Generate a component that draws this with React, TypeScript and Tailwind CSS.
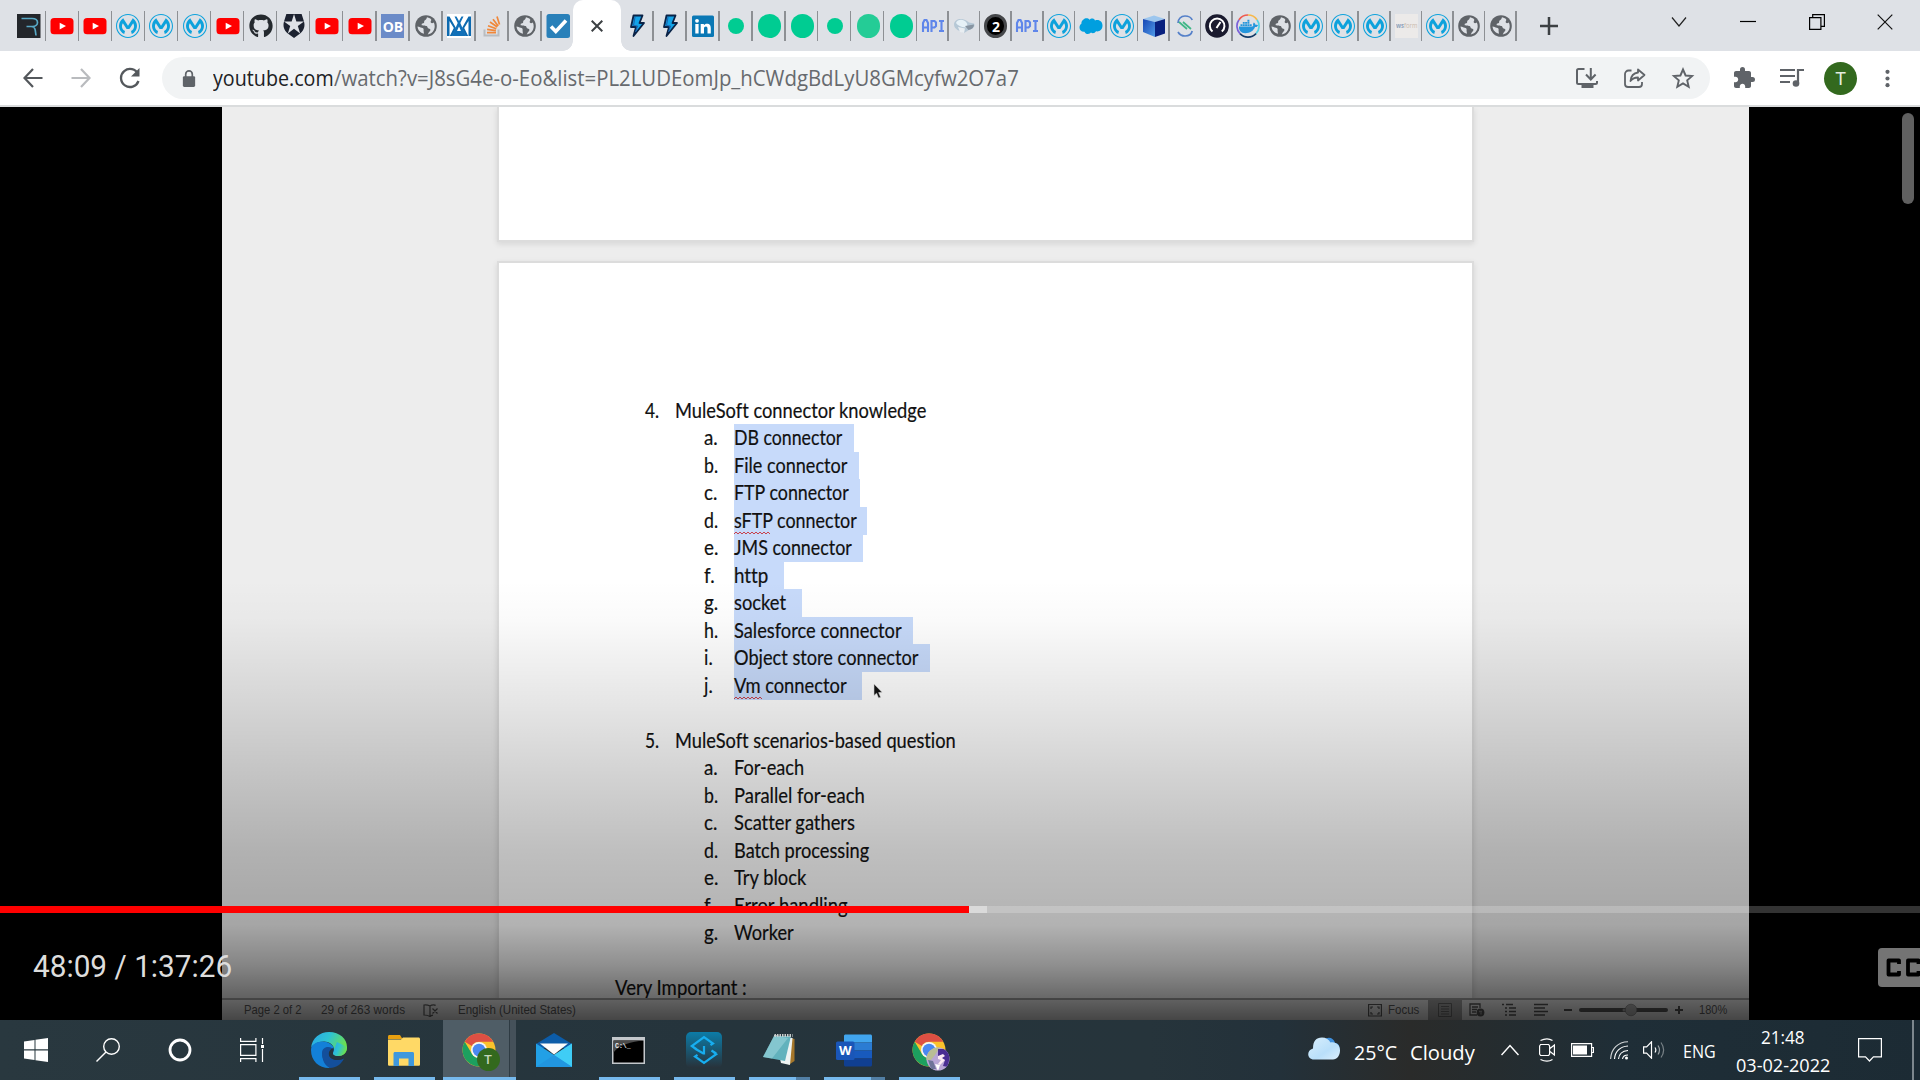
import { useLayoutEffect, useRef, type ReactNode } from "react";
import { FaGithub, FaDocker } from "react-icons/fa";
import { SiMulesoft, SiAuth0 } from "react-icons/si";
import { MdExtension } from "react-icons/md";

/* Single-line text squeezed or stretched to an exact width. */
function Fit({ w, className = "", children }: { w: number; className?: string; children: ReactNode }) {
  const ref = useRef<HTMLSpanElement>(null);
  useLayoutEffect(() => {
    const el = ref.current;
    if (el) el.style.transform = `scaleX(${w / el.offsetWidth})`;
  }, [w]);
  return (
    <span className={`inline-block shrink-0 whitespace-nowrap ${className}`} style={{ width: w }}>
      <span ref={ref} className="inline-block origin-left whitespace-nowrap">
        {children}
      </span>
    </span>
  );
}

/* ---------- favicons ---------- */

const YouTube = () => (
  <svg viewBox="0 0 24 24" className="size-6">
    <rect x="0.5" y="4" width="23" height="16.3" rx="3.6" fill="#f00" />
    <path d="M9.7 8.7 16 12.1l-6.3 3.5z" fill="#fff" />
  </svg>
);
const Mule = () => <SiMulesoft className="size-6 text-[#0ea2dc]" />;
const Globe = () => (
  <svg viewBox="0 0 24 24" className="size-6">
    <circle cx="12" cy="12" r="10.8" fill="#5f6368" />
    <path d="M13 3.3c-.6 1.2-.2 2-1.6 2.6-1.5.5-1.2 1.6-1.3 2.8-.9.8-2.6.4-2.5 2 .1 1.3 3.7.6 5 1.4 1.4.9.5 2.3 2.8 2.6 1.5.3 1.2 1.9.2 2.7-1.2 1-1.1 2-1.9 3.1 4.200-.7 7-4 7-8.200 0-1.400-.3-2.600-.9-3.700-1.100.6-2 .9-2.800.2-1-.9.4-1.900.3-3C16.700 4.500 15.100 3.700 13 3.300z" fill="#dee1e6" />
    <path d="M3.500 12.500c1.800.1 2.600 1 4.200 1.200 1.400.3 2.200.8 1.900 2.200-.2 1.200.4 1.900.3 3.900-3.600-1-6.100-3.700-6.400-7.300z" fill="#dee1e6" />
  </svg>
);
const LetterR = () => (
  <svg viewBox="0 0 24 24" className="size-6">
    <rect width="23.500" height="24" fill="#23262b" />
    <path d="M4.500 4.500H15c3.500 0 5.500 1.600 5.500 4s-2.200 4-5 4H9.500M14 12.500c3 0 4 1.500 4.300 4l.7 5" fill="none" stroke="#58a9c6" strokeWidth="1.700" />
  </svg>
);
const OB = () => (
  <span className="flex h-6 w-[23px] items-center justify-center bg-[#6b8bc8] font-['Open_Sans',sans-serif] text-[14px] font-bold tracking-tight text-white">OB</span>
);
const Peaks = () => (
  <svg viewBox="0 0 24 24" className="size-6">
    <rect width="24" height="24" fill="#fff" />
    <path d="M0 22V2.500h2.500L9 14 5.500 22H2.800l4-8L2.500 7v15zM24 22V2.500h-2.500L15 14l3.500 8h2.700l-4-8 4.300-7v15z" fill="#0d6ab0" />
    <path d="M7.500 2.500h2L12 7l2.500-4.500h2L13.300 9 19 22H5L10.700 9zM12 12.500l-2 4.500h4z" fill="#1170b8" fillRule="evenodd" />
  </svg>
);
const Stack = () => (
  <svg viewBox="0 0 24 24" className="size-6">
    <path d="M4.500 15.500v6h14v-6" fill="none" stroke="#b9bdc1" strokeWidth="2" />
    <g stroke="#f0873a" strokeWidth="1.700">
      <path d="M7 18.600h9M7.100 15.400l8.800 1.200M8 11.800l8.300 3M10 8l7.300 5M13 5.200l5.200 6.800M17 2.500l2.500 8" />
    </g>
  </svg>
);
const Check = () => (
  <svg viewBox="0 0 24 24" className="size-6">
    <rect x="0.500" width="23.500" height="24" rx="2.500" fill="#2980b9" />
    <path d="m5 12.500 4.800 5L20 6.500" fill="none" stroke="#fff" strokeWidth="3.600" />
  </svg>
);
const Bolt = () => (
  <svg viewBox="0 0 24 24" className="size-6">
    <path d="M8.500 1.500h9L14.500 9H19L8.500 22l2.500-9H6z" fill="#12a3e8" stroke="#0a2347" strokeWidth="1.800" strokeLinejoin="round" />
    <path d="m10 3-1.500 8.500 4 .5-2 6" fill="none" stroke="#1d5ea8" strokeWidth="1" />
  </svg>
);
const LinkedIn = () => (
  <svg viewBox="0 0 24 24" className="size-6">
    <rect x="1" y="1.500" width="22" height="21.500" rx="1.500" fill="#0a78b5" />
    <g fill="#fff">
      <circle cx="6" cy="6.800" r="1.900" />
      <path d="M4.300 10h3.300v9.500H4.300zM9.700 10h3.200v1.300c.6-1 1.700-1.600 3-1.600 3 0 3.900 1.900 3.900 4.700v5.100h-3.300v-4.700c0-1.300-.3-2.300-1.600-2.300s-1.900.9-1.900 2.300v4.700H9.700z" />
    </g>
  </svg>
);
const SmallDot = () => <span className="size-4 rounded-full bg-[#00cc92]" />;
const BigDot = () => <span className="h-6 w-[23px] rounded-full bg-[#00cc92]" />;
const PaleDot = () => <span className="h-6 w-[23px] rounded-full bg-[#24cc96]" />;
const Api = () => (
  <svg viewBox="0 0 24 24" className="size-6">
    <g fill="none" stroke="#5f86ea" strokeWidth="2.100">
      <path d="M2 18V9l1.500-3h2L7 9v9M2 13.500h5M10.500 18V7h3l1.500 1.500V12l-1.500 1.500h-3M18 7h5M20.500 7v10M18 17h5" />
    </g>
  </svg>
);
const Drive = () => (
  <svg viewBox="0 0 24 24" className="size-6">
    <path d="M2 10.500c0-4 4-6 8-5.500s6 3 7 3.500l5 1c1.500 3-.5 5-5 6.500l-5 3C8 17 2 15.500 2 10.500z" fill="#b6c8d6" />
    <path d="M4 9c1-3 5-4 8-2.500s4 4.500 3 6.500c-4 1-9-1-11-4z" fill="#e6f1f7" />
    <path d="m6 13 7 1.500-1 4.500-4-1z" fill="#e9eef2" />
    <path d="m13 12 9-1.500c0 3-2 5-5.500 5.500z" fill="#8794a1" />
  </svg>
);
const Two = () => (
  <span className="flex h-6 w-[23px] items-center justify-center rounded-full border-[3px] border-[#45474a] bg-black font-['Open_Sans',sans-serif] text-[14px] font-bold text-white">2</span>
);
const Salesforce = () => (
  <svg viewBox="0 0 24 24" className="size-6">
    <path d="M4.500 5.500C6 4 9 3.800 10.500 5.800 12 4 15 4 16 6.500c4-1.500 7.500 1 7.500 5s-3 6.500-6.500 5.800c-1 2-3.500 2.500-5 1.300-1.500 2-5.500 2-6.500-.9C2.500 18 .5 16 .5 13.500c0-2 .8-3 2-4-.4-1.500.7-3 2-4z" fill="#009fdf" />
  </svg>
);
const Cube = () => (
  <svg viewBox="0 0 24 24" className="size-6">
    <defs>
      <linearGradient id="cubeSide" x1="0" y1="0" x2="1" y2="1">
        <stop offset="0" stopColor="#1846b4" />
        <stop offset="1" stopColor="#4f9be8" />
      </linearGradient>
    </defs>
    <path d="m1 5 11-3.500L23 5 13 8z" fill="#9cc6ee" />
    <path d="m1 5 12 3v15L1 18z" fill="url(#cubeSide)" />
    <path d="m13 8 10-3v14.500L13 23z" fill="#08207f" />
  </svg>
);
const Swirl = () => (
  <svg viewBox="0 0 24 24" className="size-6" fill="none">
    <path d="M5 9c0-4 3-7 7-7 3.500 0 6.500 2 7.200 4M5 18c1.500 2.600 4 4 7 4 3.500 0 6.500-2 7.200-5" stroke="#5580c9" strokeWidth="1.700" />
    <path d="m6 8 8 7M10 8l8 7" stroke="#3fb787" strokeWidth="1.700" />
  </svg>
);
const Gauge = () => (
  <svg viewBox="0 0 24 24" className="size-6" fill="none">
    <circle cx="12" cy="12" r="11.800" fill="#1a1a2e" />
    <path d="M7.500 17.500a7.300 7.300 0 1 1 9.300 0M11.500 14l4-6" stroke="#fff" strokeWidth="2" />
  </svg>
);
const Docker = () => (
  <span className="relative flex size-6 items-center justify-center">
    <svg viewBox="0 0 24 24" className="absolute inset-0" fill="none" strokeWidth="1.700">
      <path d="M12 1a11 11 0 0 1 9 4.700" stroke="#f7b84b" />
      <path d="M21 5.700a11 11 0 0 1-1 14" stroke="#52d3e6" />
      <path d="M20 19.700a11 11 0 0 1-16 0" stroke="#123a66" />
      <path d="M4 19.700A11 11 0 0 1 3 5.700" stroke="#7b61d8" />
      <path d="M3 5.700A11 11 0 0 1 12 1" stroke="#ef5b50" />
    </svg>
    <FaDocker className="size-[19px] text-[#2496dc]" />
  </span>
);
const WsForm = () => (
  <span className="flex h-6 w-[23px] items-center justify-center bg-[#eceae9] font-['Open_Sans',sans-serif] text-[7px] text-[#c9b9ad]">
    <Fit w={21}>
      <b className="text-[#8fa3bd]">ws</b>form
    </Fit>
  </span>
);
const Github = () => <FaGithub className="size-6 text-[#24292e]" />;
const Auth0 = () => <SiAuth0 className="size-6 text-[#1c2230]" />;

const leftTabs = [LetterR, YouTube, YouTube, Mule, Mule, Mule, YouTube, Github, Auth0, YouTube, YouTube, OB, Globe, Peaks, Stack, Globe];
const midTabs = [Bolt, Bolt, LinkedIn, SmallDot, BigDot, BigDot, SmallDot, PaleDot, BigDot];
const rightTabs = [Api, Drive, Two, Api, Mule, Salesforce, Mule, Cube, Swirl, Gauge, Docker, Globe, Mule, Mule, Mule, WsForm, Mule, Globe, Globe];

function Sep() {
  return <span className="-ml-px h-[30px] w-[1.500px] shrink-0 bg-[#8d9094]" />;
}

function TabStrip() {
  return (
    <div className="flex h-[51px] bg-[#dee1e6] pl-[13px]">
      {leftTabs.map((Icon, i) => (
        <div key={i} className="flex h-[52px] w-[33.060px] shrink-0 items-center">
          <span className="flex flex-1 items-center justify-center">
            <Icon />
          </span>
          <Sep />
        </div>
      ))}
      <div className="flex h-[52px] w-[31px] shrink-0 items-center pl-[4px]">
        <Check />
      </div>
      <div className="relative flex h-[51px] w-[48px] shrink-0 items-center justify-center rounded-t-[10px] bg-white">
        <span className="absolute bottom-0 left-[-10px] size-[10px] bg-[radial-gradient(circle_at_0_0,transparent_9.500px,white_10px)]" />
        <span className="absolute right-[-10px] bottom-0 size-[10px] bg-[radial-gradient(circle_at_100%_0,transparent_9.500px,white_10px)]" />
        <svg viewBox="0 0 12 12" className="size-3">
          <path d="m.7.7 10.600 10.600M11.300.7.7 11.300" stroke="#3c4043" strokeWidth="2" />
        </svg>
      </div>
      {midTabs.map((Icon, i) => (
        <div key={i} className="flex h-[52px] w-[32.960px] shrink-0 items-center">
          <span className="flex flex-1 items-center justify-center pl-px">
            <Icon />
          </span>
          <Sep />
        </div>
      ))}
      {rightTabs.map((Icon, i) => (
        <div key={i} className="flex h-[52px] w-[31.550px] shrink-0 items-center">
          <span className="flex flex-1 items-center justify-center">
            <Icon />
          </span>
          <Sep />
        </div>
      ))}
      <svg viewBox="0 0 18 18" className="mt-[17px] ml-[23px] size-[18px]">
        <path d="M9 0v18M0 9h18" stroke="#3c4043" strokeWidth="2.500" />
      </svg>
      <div className="mt-[13px] ml-auto flex h-[18px] items-center pr-[27px]">
        <svg viewBox="0 0 16 18" className="h-[18px] w-4" fill="none" stroke="#222" strokeWidth="1.200">
          <path d="m1 4.500 7 8.500 7-8.500" />
        </svg>
        <svg viewBox="0 0 16 18" className="ml-[53px] h-[18px] w-4">
          <path d="M0 8.500h16" stroke="#000" strokeWidth="1.200" />
        </svg>
        <svg viewBox="0 0 16 16" className="ml-[53px] size-4" fill="none" stroke="#000" strokeWidth="1.200">
          <path d="M.6 3.600h11.300v11.700H.6zM3.700 3.600V.6h11.700v11.700h-3.500" />
        </svg>
        <svg viewBox="0 0 16 16" className="ml-[52px] size-4" stroke="#111" strokeWidth="1.200">
          <path d="m.7.7 14.600 14.600M15.300.7.7 15.300" />
        </svg>
      </div>
    </div>
  );
}

function Toolbar() {
  return (
    <div className="flex h-[56px] items-center border-b-2 border-[#dadcdd] bg-white font-['Open_Sans',sans-serif]">
      <svg viewBox="0 0 20 20" className="ml-[23px] size-5" fill="none" stroke="#54585c" strokeWidth="2.200">
        <path d="M19.500 10H1.800M10 1 1.500 10 10 19" />
      </svg>
      <svg viewBox="0 0 20 20" className="ml-[28px] size-5" fill="none" stroke="#b9bbbe" strokeWidth="2.200">
        <path d="M.5 10h17.700M10 1l8.500 9-8.500 9" />
      </svg>
      <svg viewBox="0 0 22 22" className="ml-[28px] size-[22px]" fill="none" stroke="#54585c" strokeWidth="2.300">
        <path d="M19.200 7.200A9 9 0 1 0 19.500 14" />
        <path d="M20.500 1v8.500H12z" fill="#54585c" stroke="none" />
      </svg>
      <div className="ml-[21px] flex h-[42px] w-[1548px] items-center rounded-full bg-[#f1f3f4]">
        <svg viewBox="0 0 14 18" className="ml-[20px] h-[17px] w-[14px]">
          <rect x="0.500" y="6.500" width="13" height="11.500" rx="1.500" fill="#5f6368" />
          <path d="M3.500 8V4.500a3.500 3.500 0 0 1 7 0V8" fill="none" stroke="#5f6368" strokeWidth="1.800" />
        </svg>
        <Fit w={121} className="ml-[17px] text-[21px] leading-[42px] text-[#202124]">youtube.com</Fit>
        <Fit w={685} className="text-[21px] leading-[42px] text-[#676a6e]">/watch?v=J8sG4e-o-Eo&amp;list=PL2LUDEomJp_hCWdgBdLyU8GMcyfw2O7a7</Fit>
        <svg viewBox="0 0 22 20" className="ml-auto h-5 w-[22px]" fill="none" stroke="#5f6368" strokeWidth="2">
          <path d="M8.500 1H2.500A1.500 1.500 0 0 0 1 2.500v12A1.500 1.500 0 0 0 2.500 16h17a1.500 1.500 0 0 0 1.500-1.500V13M14.800 0v10M10 6.500l4.800 5 4.800-5" />
          <path d="M5.500 16h12v4h-12z" fill="#5f6368" stroke="none" />
        </svg>
        <svg viewBox="0 0 22 20" className="ml-[26px] h-5 w-[22px]" fill="none" stroke="#5f6368" strokeWidth="1.800">
          <path d="M7.500 2.500h-3A3.500 3.500 0 0 0 1 6v10a3 3 0 0 0 3 3h11a3 3 0 0 0 3-3v-2" />
          <path d="M14 1.500 20.500 7 14 12.500V9.500c-3.500 0-5.500.8-7.500 3.500C7 8 9.500 5 14 4.500z" strokeLinejoin="round" />
        </svg>
        <svg viewBox="0 0 24 24" className="mr-[15px] ml-[25px] size-6" fill="none" stroke="#5f6368" strokeWidth="1.900">
          <path d="m12 3.500 2.600 6 6.500.6-4.900 4.300 1.500 6.400-5.700-3.400-5.700 3.400 1.500-6.400-4.900-4.300 6.500-.6z" />
        </svg>
      </div>
      <MdExtension className="ml-[22px] size-6 text-[#5f6368]" />
      <svg viewBox="0 0 24 20" className="ml-[24px] h-5 w-6" fill="none" stroke="#5f6368" strokeWidth="2.200">
        <path d="M0 2h15M0 8h15M0 14h10M18 15V2h6" />
        <circle cx="16" cy="15.500" r="3.300" fill="#5f6368" stroke="none" />
      </svg>
      <span className="ml-[20px] flex size-[33px] items-center justify-center rounded-full bg-[#33691e] font-[Roboto,sans-serif] text-[18px] text-[#e4ede0]">T</span>
      <svg viewBox="0 0 6 22" className="ml-[28px] h-[21px] w-[5px]" fill="#5f6368">
        <circle cx="3" cy="3" r="2.500" />
        <circle cx="3" cy="11" r="2.500" />
        <circle cx="3" cy="19" r="2.500" />
      </svg>
    </div>
  );
}

/* ---------- Word document inside the video ---------- */

type Item = { mark: string; text: string; w: number; sel?: number; wavy?: number };

const connectors: Item[] = [
  { mark: "a.", text: "DB connector", w: 108, sel: 120 },
  { mark: "b.", text: "File connector", w: 113.5, sel: 125.5 },
  { mark: "c.", text: "FTP connector", w: 114.5, sel: 126.5 },
  { mark: "d.", text: "sFTP connector", w: 122.5, sel: 133.5, wavy: 37 },
  { mark: "e.", text: "JMS connector", w: 118, sel: 129.5 },
  { mark: "f.", text: "http", w: 34, sel: 50 },
  { mark: "g.", text: "socket", w: 52, sel: 68 },
  { mark: "h.", text: "Salesforce connector", w: 167.5, sel: 179 },
  { mark: "i.", text: "Object store connector", w: 184.5, sel: 196.5 },
  { mark: "j.", text: "Vm connector", w: 112.5, sel: 128.5, wavy: 28 },
];

const scenarios: Item[] = [
  { mark: "a.", text: "For-each", w: 70 },
  { mark: "b.", text: "Parallel for-each", w: 131 },
  { mark: "c.", text: "Scatter gathers", w: 121 },
  { mark: "d.", text: "Batch processing", w: 135.5 },
  { mark: "e.", text: "Try block", w: 72.5 },
  { mark: "f.", text: "Error handling", w: 114 },
  { mark: "g.", text: "Worker", w: 60 },
];

const markWidths: Record<string, number> = { "c.": 13, "f.": 10.5, "i.": 8.5, "j.": 8.5 };

function Squiggle({ width }: { width: number }) {
  let d = "M0 3";
  for (let x = 2; x <= width; x += 2) d += `L${x} ${x % 4 === 2 ? 1 : 3}`;
  return (
    <svg className="absolute bottom-0 left-0 h-1 w-[40px]" fill="none" stroke="#c8414b" strokeWidth="1">
      <path d={d} />
    </svg>
  );
}

function Heading({ n, text, w }: { n: string; text: string; w: number }) {
  return (
    <div className="flex h-[27.500px] pl-[146px]">
      <Fit w={14.5} className="mr-[15px]">{n}</Fit>
      <Fit w={w}>{text}</Fit>
    </div>
  );
}

function Rows({ items }: { items: Item[] }) {
  return (
    <>
      {items.map((it) => (
        <div key={it.text} className="flex h-[27.500px] pl-[205px]">
          <span className="w-[29.500px] shrink-0">
            <Fit w={markWidths[it.mark] ?? 14}>{it.mark}</Fit>
          </span>
          <div className={`relative h-[28px] shrink-0 ${it.sel ? "bg-[#c7dafa]" : ""}`} style={{ width: it.sel ?? it.w }}>
            <Fit w={it.w}>{it.text}</Fit>
            {it.wavy && <Squiggle width={it.wavy} />}
          </div>
        </div>
      ))}
    </>
  );
}

function WordStatusBar() {
  return (
    <div className="flex h-[22px] w-[1527px] shrink-0 items-center border-t-2 border-[#a6a6a6] bg-[#f0f0f0] pl-[22px] font-['Liberation_Sans',sans-serif] text-[13px] text-[#5e5e5e]">
      <Fit w={58}>Page 2 of 2</Fit>
      <Fit w={84.5} className="ml-[19px]">29 of 263 words</Fit>
      <svg viewBox="0 0 15 13" className="ml-[17px] h-[13px] w-[15px]" fill="none" stroke="#5e5e5e" strokeWidth="1.200">
        <path d="M7 2v11M7 2C5 1 3 .8 1 1v10c2 0 4 .2 6 1.500 1-.8 1.500-1 3-1.300M7 2c1-.8 3-1.200 5-1v1M9.500 4.500l5 5M14.500 4.500l-5 5" />
      </svg>
      <Fit w={118} className="ml-[20px]">English (United States)</Fit>
      <svg viewBox="0 0 14 14" className="ml-auto size-[14px]" fill="none" stroke="#5a5a5a" strokeWidth="1.200">
        <path d="M.6 1.500h12.800v11.500H.6zM3 6V4h2M9 4h2v2M11 9v2H9M5 11H3V9" />
      </svg>
      <Fit w={31} className="ml-[6px]">Focus</Fit>
      <div className="ml-[9px] flex h-[20px] w-[34px] items-center justify-center bg-[#a4a4a4]">
        <svg viewBox="0 0 14 14" className="size-[14px]" fill="none" stroke="#6c6c6c" strokeWidth="1">
          <path d="M.5.500h13v13H.5zM3 3.500h8M3 6h8M3 8.500h8M3 11h8" />
        </svg>
      </div>
      <svg viewBox="0 0 16 14" className="ml-[7px] h-[14px] w-4" fill="none" stroke="#585858" strokeWidth="1.300">
        <path d="M8 12H1V1h10v4M3 4h6M3 6.500h5M3 9h4" />
        <circle cx="11.500" cy="9.500" r="3.900" fill="#555" stroke="none" />
        <path d="M10 8.500h3M12 9.500v2" stroke="#a0a0a0" />
      </svg>
      <svg viewBox="0 0 14 14" className="ml-[17px] size-[14px]" stroke="#555" strokeWidth="1.500">
        <path d="M0 1.500h2M4 1.500h7M3 5h2M7 5h7M3 8.500h2M7 8.500h7M3 12h2M7 12h7" />
      </svg>
      <svg viewBox="0 0 14 14" className="ml-[18px] size-[14px]" stroke="#555" strokeWidth="1.500">
        <path d="M0 1.500h14M0 5h11M0 8.500h14M0 12h11" />
      </svg>
      <svg viewBox="0 0 120 14" className="ml-[16px] h-[14px] w-[120px]">
        <path d="M0 7h8M111 7h8M115 3v8" stroke="#555" strokeWidth="2" />
        <rect x="15" y="5" width="89" height="4" rx="2" fill="#5a5a5a" />
        <circle cx="60" cy="7" r="1.500" fill="#aaa" />
        <circle cx="67" cy="7" r="5.800" fill="#b4b4b4" stroke="#777" strokeWidth="0.600" />
      </svg>
      <Fit w={28} className="mr-[22px] ml-[15px]">180%</Fit>
    </div>
  );
}

function Video() {
  return (
    <div className="relative flex h-[913px] flex-col overflow-hidden bg-black pl-[222px]">
      <div className="flex h-[891px] w-[1527px] flex-col overflow-hidden bg-[#ededed] pl-[275px]">
        <div className="h-[135px] w-[977px] shrink-0 border-2 border-t-0 border-[#dcdcdc] bg-white shadow-[0_2px_6px_rgba(0,0,0,0.1)]" />
        <div className="mt-[19px] h-[760px] w-[977px] shrink-0 border-2 border-[#dcdcdc] bg-white pt-[133.500px] font-[Lato,sans-serif] text-[21.500px] leading-[27.500px] text-[#111] shadow-[0_2px_6px_rgba(0,0,0,0.1)] [-webkit-text-stroke:0.200px_#111] [font-variant-ligatures:none]">
          <Heading n="4." text="MuleSoft connector knowledge" w={251} />
          <Rows items={connectors} />
          <div className="h-[27.500px]" />
          <Heading n="5." text="MuleSoft scenarios-based question" w={281} />
          <Rows items={scenarios} />
          <div className="h-[27.500px]" />
          <div className="pl-[116px]">
            <Fit w={132}>Very Important :</Fit>
          </div>
        </div>
      </div>
      <WordStatusBar />

      {/* player overlay */}
      <svg viewBox="0 0 10 16" className="absolute top-[576px] left-[873px] h-[16px] w-[10px]">
        <path d="M1 1v11.500l2.600-2.300 2 4.800 2-.8-2-4.600 3.400-.3z" fill="#111" stroke="#ddd" strokeWidth="0.600" />
      </svg>
      <div className="absolute inset-x-0 top-[473px] bottom-0 bg-[linear-gradient(to_bottom,rgba(0,0,0,0)_0px,rgba(0,0,0,0.02)_40px,rgba(0,0,0,0.100)_125px,rgba(0,0,0,0.180)_200px,rgba(0,0,0,0.250)_270px,rgba(0,0,0,0.300)_345px,rgba(0,0,0,0.440)_385px,rgba(0,0,0,0.600)_420px,rgba(0,0,0,0.710)_440px)]" />
      <div className="absolute inset-x-0 top-[799px] flex h-[7px] bg-white/20">
        <div className="w-[969px] bg-[#ff0000]" />
        <div className="w-[18px] bg-[#dadada]" />
      </div>
      <div className="absolute top-[840px] left-[32.500px] h-[40px] font-[Roboto,sans-serif] text-[30.500px] leading-[40px] text-[#ddd]">
        <Fit w={199}>48:09 / 1:37:26</Fit>
      </div>
      <svg viewBox="0 0 42 39" className="absolute top-[841px] left-[1878px] h-[39px] w-[42px]">
        <rect width="60" height="39" rx="4" fill="#747474" />
        <path d="M21 16v-3.500H10.500v14H21V23M40.500 16v-3.500H30v14h10.500V23" fill="none" stroke="#000" strokeWidth="3.800" strokeLinejoin="round" />
      </svg>
      <div className="absolute top-[6px] left-[1902px] h-[91px] w-[12px] rounded-full bg-[#606060]" />
    </div>
  );
}

/* ---------- Windows taskbar ---------- */

function ChromeLogo() {
  return (
    <svg viewBox="0 0 34 34" className="size-[34px]">
      <circle cx="17" cy="17" r="16.500" fill="#fbc22b" />
      <path d="M2.700 8.750A16.500 16.500 0 0 1 31.300 8.750H17a8 8 0 0 0-7.100 4.300z" fill="#dd4f43" />
      <path d="M2.700 8.750A16.500 16.500 0 0 0 16.500 33.500l7.300-12.600a8 8 0 0 1-13.800 0z" fill="#1da05f" />
      <circle cx="17" cy="17" r="8" fill="#f5f5f5" />
      <circle cx="17" cy="17" r="6.300" fill="#4a88f0" />
    </svg>
  );
}

const Edge = () => (
  <svg viewBox="0 0 36 36" className="size-9">
    <defs>
      <linearGradient id="edgeTop" x1="0" y1="0" x2="1" y2="0.400">
        <stop offset="0" stopColor="#2aa5e8" />
        <stop offset="0.500" stopColor="#2ec3d3" />
        <stop offset="1" stopColor="#6be04f" />
      </linearGradient>
    </defs>
    <path d="M0 16C1 6 9 0 18 0c11 0 18 7 18 15 0 6-4 9-9 9-3 0-5-1-5-2.500 0-1 1-1.500 1-4 0-4-4-8-10-8C6 9.500 1.500 13 0 16z" fill="url(#edgeTop)" />
    <path d="M0 18C0 13 5 9.500 11 9.500c6 0 12 3 12 8.500 0 1.500-.6 2.500-1 3.500-2-4-8-4-10 0-1.500 5 2 10 8 12.500l-2 2C8 36 0 29 0 18z" fill="#1380d8" />
    <path d="M11 21c0-3.500 2.500-6 6-6 3 0 5.500 1.500 5.800 3.500-.3 1.500-1 2-.8 3-2-2-4-1-4 1 0 3 4 6 9 5.500 3 0 4.500-1 6-1.500-3 6-8 9.500-14 9.500-5-2-8-8-8-15z" fill="#134f9b" />
    <path d="M22.500 16c.8 2-.5 3.500-.5 5 0 2.500 4 4.500 8.500 3.300L32 26.500c-1.500.8-3 1.200-5 1.200-5.500.2-9.200-2.500-9.200-6 0-2.500 2-5 4.700-5.700z" fill="#26343c" />
    <path d="M23 17.500c0 2.500-1 3-1 4 0 1.500 2 2.500 5 2.500 5 0 9-3 9-9l-10-5z" fill="url(#edgeTop)" />
  </svg>
);

const Folder = () => (
  <svg viewBox="0 0 32 31" className="h-[31px] w-8">
    <path d="M0 1.500C0 .6.600 0 1.500 0H12l2.500 4H0z" fill="#e8a010" />
    <path d="M0 4.500h13l2-2h15.500c.9 0 1.500.600 1.500 1.500v25.500c0 .8-.6 1.300-1.300 1.300H1.300C.6 30.800 0 30.300 0 29.500z" fill="#ffd966" />
    <path d="M5.500 31V18.500c0-.9.600-1.500 1.500-1.500h17.500c.9 0 1.500.600 1.500 1.500V31h-5.500v-7.500h-9.500V31z" fill="#3f98dd" />
  </svg>
);

const Mail = () => (
  <svg viewBox="0 0 36 34" className="h-[34px] w-9">
    <path d="M0 11 18 0l18 11v4H0z" fill="#0c5ca8" />
    <path d="M0 10.500 18 22 36 10.500V34H0z" fill="#22a0e6" />
    <path d="M36 10.500V34L18 22z" fill="#3fcdf6" />
    <path d="M4 10.500h28L18 21.500z" fill="#fbfbfb" />
    <path d="M18 22 36 34H0z" fill="#2196e0" />
  </svg>
);

const Cmd = () => (
  <svg viewBox="0 0 33 27" className="h-[27px] w-[33px]">
    <rect width="33" height="27" fill="#c4c8cc" />
    <rect x="1.500" y="3.500" width="30" height="22" fill="#000" />
    <path d="M1.500 3.500h30c-12 1-24 4-30 12z" fill="#4b4b4b" />
    <text x="3" y="11" fontSize="6.500" fill="#eee" fontFamily="Liberation Mono, monospace" fontWeight="700">C:\_</text>
  </svg>
);

const Studio = () => (
  <svg viewBox="0 0 36 36" className="size-9">
    <defs>
      <linearGradient id="studioBg" x1="0" y1="0" x2="0" y2="1">
        <stop offset="0" stopColor="#0c7ca8" />
        <stop offset="1" stopColor="#28323a" />
      </linearGradient>
    </defs>
    <rect width="36" height="36" rx="5" fill="url(#studioBg)" />
    <path d="M10.500 17.500 5.800 14 18 5l9 6.500-2.500 1.700M25.500 18.500l4.700 3.700L18 31 9 24.500l2.500-1.700M18 14v8.500M10.500 17.500l7 4M25.500 18.500l4.700 3M5.800 14l5 3.500" fill="none" stroke="#17aef0" strokeWidth="2.200" />
  </svg>
);

const Notepad = () => (
  <svg viewBox="0 0 34 34" className="size-[34px]">
    <path d="m29 5 3.500 1v22l-6 4z" fill="#a5762a" />
    <path d="M12 2 30.500 5 28 32 19 30z" fill="#eef3f3" />
    <path d="M12 3h17l-6 25L1 24z" fill="#62b2bd" />
    <path d="M12 3 1 24l9 1.500L26 5z" fill="#9bd4da" opacity="0.600" />
    <path d="M12.500 2.500h18" stroke="#c9cdcd" strokeWidth="3" strokeDasharray="1.500 1" />
  </svg>
);

const Word = () => (
  <svg viewBox="0 0 36 33" className="h-[33px] w-9">
    <path d="M8 2c0-1 .8-1.500 1.500-1.500h25c.8 0 1.500.700 1.500 1.500v6.500H8z" fill="#41a5ee" />
    <path d="M8 8.500h28v8H8z" fill="#2b7cd3" />
    <path d="M8 16.500h28v8H8z" fill="#185abd" />
    <path d="M8 24.500h28V31c0 .8-.7 1.500-1.500 1.500h-25C8.700 32.500 8 31.800 8 31z" fill="#103f91" />
    <rect y="7.500" width="18.500" height="18.500" rx="1.500" fill="#1a56b8" />
    <text x="9.200" y="21.300" textAnchor="middle" fontSize="13" fontWeight="700" fill="#fff" fontFamily="Open Sans, sans-serif">W</text>
  </svg>
);

function ChromeT() {
  return (
    <span className="relative size-[34px]">
      <ChromeLogo />
      <span className="absolute top-[15px] left-[15px] flex size-[23px] items-center justify-center rounded-full bg-[#33691e] font-[Roboto,sans-serif] text-[13px] font-medium text-[#c5d5bd]">T</span>
    </span>
  );
}

function ChromeAvatar() {
  return (
    <span className="relative size-[34px]">
      <ChromeLogo />
      <svg viewBox="0 0 24 24" className="absolute top-[14px] left-[14px] size-6">
        <defs>
          <clipPath id="avatar">
            <circle cx="12" cy="12" r="11.500" />
          </clipPath>
        </defs>
        <g clipPath="url(#avatar)">
          <rect width="24" height="24" fill="#b9a6d6" />
          <path d="M0 0h14L9 8l-4 5H0z" fill="#b9bd95" />
          <path d="M12 2l7 0 5 5-2 13-5-1 2-6-7-2z" fill="#4a2d92" />
          <path d="M12 9l5-2 2 2-3 2 3 2-5 5-2-1 3-4-3-1z" fill="#fbeaf3" />
          <path d="M2 13l5 1 3 8-5 0z" fill="#6f7399" />
          <path d="M9 17l5 1-2 6z" fill="#fff" />
        </g>
      </svg>
    </span>
  );
}

type TaskEntry = { Icon: () => ReactNode; state: "idle" | "open" | "multi" | "active" };
const apps: TaskEntry[] = [
  { Icon: Edge, state: "open" },
  { Icon: Folder, state: "open" },
  { Icon: ChromeT, state: "active" },
  { Icon: Mail, state: "idle" },
  { Icon: Cmd, state: "open" },
  { Icon: Studio, state: "open" },
  { Icon: Notepad, state: "multi" },
  { Icon: Word, state: "multi" },
  { Icon: ChromeAvatar, state: "open" },
];

function TaskApp({ Icon, state }: TaskEntry) {
  return (
    <div className="relative flex h-[60px] w-[75px] shrink-0 items-center justify-center pr-[2px]">
      {state === "active" && (
        <div className="absolute inset-y-0 left-px flex w-[73px]">
          <div className="w-[66px] bg-[#4f5d66]" />
          <div className="w-px bg-[#2e3b43]" />
          <div className="w-[6px] bg-[#45515a]" />
        </div>
      )}
      <span className="relative flex">
        <Icon />
      </span>
      {state === "active" && <div className="absolute bottom-0 left-px h-[3px] w-[73px] bg-[#76b9ed]" />}
      {state === "open" && <div className="absolute bottom-0 left-[7px] h-[3px] w-[61px] bg-[#76b9ed]" />}
      {state === "multi" && (
        <div className="absolute bottom-0 left-[7px] flex h-[3px] w-[61px]">
          <div className="w-[47px] bg-[#76b9ed]" />
          <div className="w-[14px] bg-[#527fa5]" />
        </div>
      )}
    </div>
  );
}

function Taskbar() {
  return (
    <div className="flex h-[60px] items-center bg-[linear-gradient(to_right,#29383f_0px,#25343c_700px,#26343b_1150px,#23313a_1280px,#2a2b2a_1410px,#262c2e_1480px,#1f2e37_1620px,#1c2b34_1920px)] font-['Open_Sans',sans-serif] text-white">
      <div className="flex w-[72px] shrink-0 justify-center">
        <svg viewBox="0 0 24 24" className="size-6" fill="#fff">
          <path d="M0 3.400 10.500 2v9.300H0zM11.500 1.800 24 0v11.300H11.500zM0 12.500h10.500V22L0 20.600zM11.500 12.500H24V24l-12.500-1.800z" />
        </svg>
      </div>
      <div className="flex w-[72px] shrink-0 justify-center">
        <svg viewBox="0 0 24 24" className="size-6" fill="none" stroke="#fff" strokeWidth="1.400">
          <circle cx="15.500" cy="8.500" r="7.800" />
          <path d="M10 14 .5 23.500" />
        </svg>
      </div>
      <div className="flex w-[72px] shrink-0 justify-center">
        <svg viewBox="0 0 24 24" className="size-6" fill="none" stroke="#fff" strokeWidth="2.800">
          <circle cx="12" cy="12" r="10" />
        </svg>
      </div>
      <div className="flex w-[76px] shrink-0 pl-[24px]">
        <svg viewBox="0 0 24 24" className="size-6" fill="none" stroke="#fff" strokeWidth="1.200">
          <path d="M.6 0v3.400h15.300V0M.6 24v-3.400h15.300V24M.6 6.600h15.300v10.800H.6zM22.500 0v6M22.500 11v13" />
          <path d="M21 7h3v3h-3z" fill="#fff" stroke="none" />
        </svg>
      </div>
      {apps.map((a, i) => (
        <TaskApp key={i} {...a} />
      ))}
      <svg viewBox="0 0 32 23" className="mb-1 ml-[341px] h-[23px] w-8 shrink-0">
        <defs>
          <linearGradient id="cloud" x1="0" y1="0" x2="1" y2="1">
            <stop offset="0" stopColor="#d9effc" />
            <stop offset="0.600" stopColor="#b9dffa" />
            <stop offset="1" stopColor="#dceffd" />
          </linearGradient>
        </defs>
        <path d="M16 3c4-4 10-2 11 3 4 0 5 4 4.500 8L20 12z" fill="#3f8fdc" />
        <path d="M6 22.500c-7 0-8-9-1-11C5 4 8 .5 14 .5c4 0 7 2 8.500 5 6-1 9.500 3 9.500 8s-3 9-7 9z" fill="url(#cloud)" />
      </svg>
      <Fit w={43} className="mt-[3px] ml-[14px] text-[20.500px] leading-[30px]">25°C</Fit>
      <Fit w={65} className="mt-[3px] ml-[13px] text-[20.500px] leading-[30px]">Cloudy</Fit>
      <svg viewBox="0 0 18 12" className="ml-[26px] h-3 w-[18px] shrink-0" fill="none" stroke="#fff" strokeWidth="1.500">
        <path d="m.5 11 8.500-9.500L17.500 11" />
      </svg>
      <svg viewBox="0 0 16 24" className="ml-[20px] h-6 w-4 shrink-0" fill="none" stroke="#fff" strokeWidth="1.200">
        <path d="M1.500 2.500c4-2 9-2 12 0M1.500 21.500c4 2 9 2 12 0M.6 8l1-1.500h8l1 1.500v8l-1 1.500h-8l-1-1.500zM11 10.500 15.400 7v10L11 13.500" />
      </svg>
      <svg viewBox="0 0 23 14" className="ml-[16px] h-[14px] w-[23px] shrink-0">
        <path d="M.6.6h20v12.800H.6zM21 4.500h1.500v5H21" fill="none" stroke="#fff" strokeWidth="1.200" />
        <rect x="2" y="2.500" width="14" height="9" fill="#fff" />
      </svg>
      <svg viewBox="0 0 19 19" className="ml-[16px] size-[19px] shrink-0" fill="none" stroke="#fff" strokeWidth="1.100">
        <path d="M.6 18C1 8 8 1 18 .8" opacity="0.800" />
        <path d="M4.500 18C5 10.500 10 5.500 18 5M8.500 18C9 13 12 10 18 9.500M12.500 18c.3-2 2-4 5.500-4" />
        <circle cx="16.500" cy="17" r="1.500" fill="#fff" stroke="none" />
      </svg>
      <svg viewBox="0 0 22 18" className="ml-[14px] h-[18px] w-[22px] shrink-0" fill="none" stroke="#fff" strokeWidth="1.200">
        <path d="M.6 5.800h3L8.500.8v16.400l-4.900-5h-3zM12 6.500c1 1.500 1 3.500 0 5" />
        <path d="M15 4.500c2 3 2 6 0 9" opacity="0.550" />
        <path d="M18 1.500c3.500 5 3.500 10 0 15" opacity="0.400" />
      </svg>
      <Fit w={33} className="mt-px ml-[18px] text-[17.500px] leading-[24px]">ENG</Fit>
      <div className="mt-[1px] ml-[20px] flex w-[94px] shrink-0 flex-col items-center text-[17.500px] leading-[28px]">
        <Fit w={44}>21:48</Fit>
        <Fit w={94}>03-02-2022</Fit>
      </div>
      <svg viewBox="0 0 24 24" className="ml-[28px] size-6 shrink-0" fill="none" stroke="#fff" strokeWidth="1.200">
        <path d="M.6.6h22.800v18.200h-8L11.500 23l-4-4.200H.6z" />
      </svg>
      <div className="ml-[30px] h-[60px] w-[1.500px] shrink-0 bg-[#7d878d]" />
    </div>
  );
}

export default function App() {
  return (
    <div className="flex h-[1080px] w-[1920px] flex-col overflow-hidden">
      <TabStrip />
      <Toolbar />
      <Video />
      <Taskbar />
    </div>
  );
}
